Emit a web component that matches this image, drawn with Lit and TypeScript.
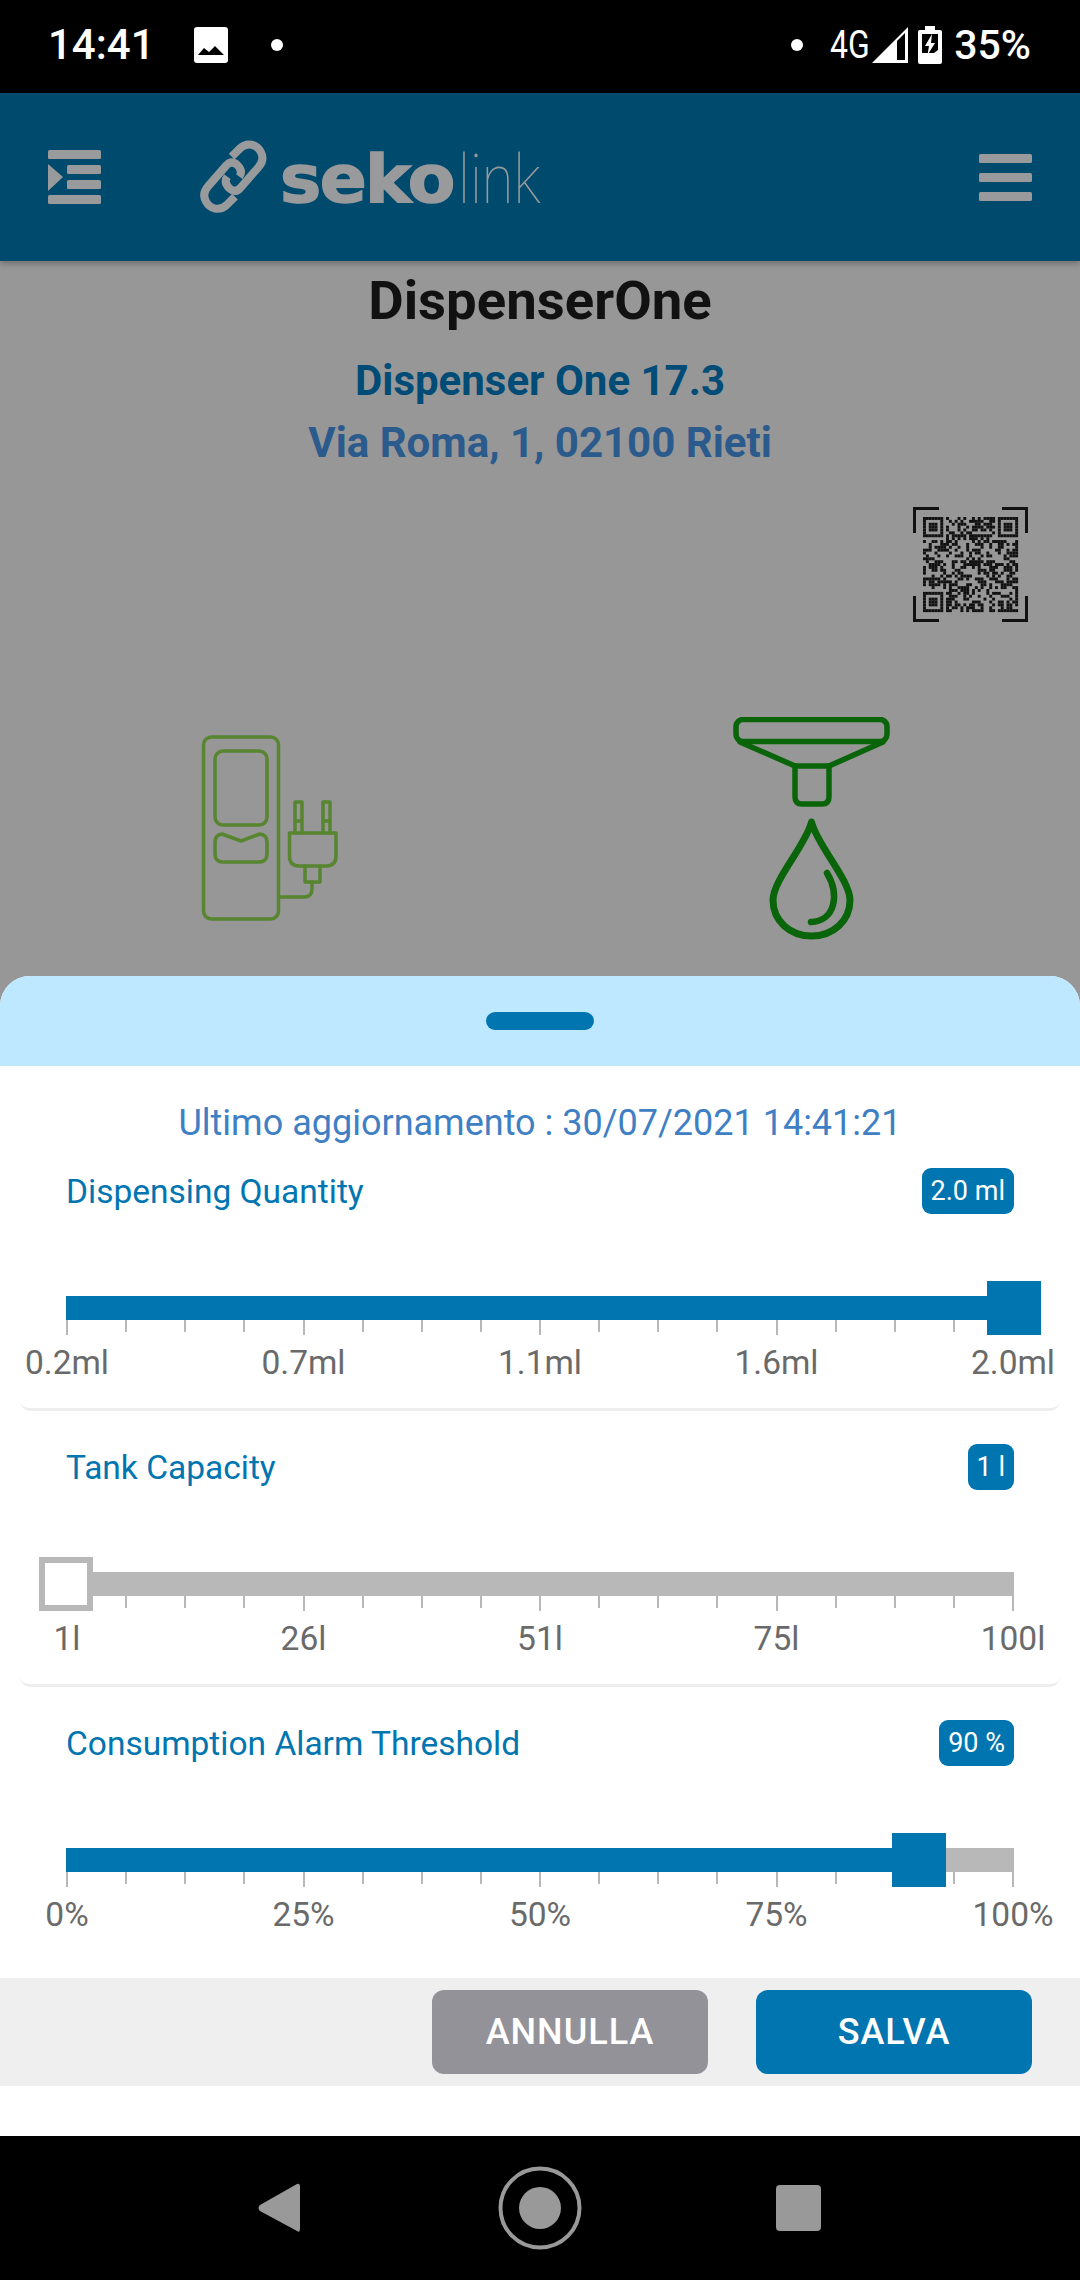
import { LitElement, html, css, svg } from "lit";
import { customElement, property } from "lit/decorators.js";

@customElement("slider-row")
class SliderRow extends LitElement {
  @property() label = "";
  @property() value = "";
  @property({ type: Number }) pct = 0;
  @property({ type: Array }) marks: string[] = [];

  static styles = css`
    :host { display: block; height: 276px; box-sizing: border-box; margin: 0 20px; padding: 33px 46px 0; border-bottom: 3px solid #eeeeee; border-radius: 0 0 10px 10px; font-family: Roboto, sans-serif; }
    :host([last]) { border-bottom-color: transparent; }
    .head { display: flex; justify-content: space-between; align-items: center; height: 46px; }
    .label { font-size: 33.5px; color: #0075b0; }
    .badge { height: 46px; box-sizing: border-box; padding: 0 9px; min-width: 45px; border-radius: 9px; background: #0075b0; color: #fff; font-size: 27px; display: flex; align-items: center; justify-content: center; }
    .track { position: relative; height: 24px; margin-top: 82px; background: #b8b8b8; }
    .fill { height: 100%; background: #0075b0; }
    .thumb { position: absolute; top: -15px; width: 54px; height: 54px; margin-left: -27px; box-sizing: border-box; background: #0075b0; }
    .thumb.empty { background: #fff; border: 6px solid #b8b8b8; }
    .ticks { display: flex; justify-content: space-between; height: 15px; }
    .ticks i { width: 2px; height: 12px; background: #b8b8b8; }
    .ticks i.major { height: 15px; }
    .marks { display: flex; justify-content: space-between; margin-top: 8px; padding: 0 1px; }
    .marks span { width: 0; display: flex; justify-content: center; white-space: nowrap; font-size: 33.5px; line-height: 40px; color: #6a6a6a; }
  `;

  render() {
    const empty = this.pct === 0;
    return html`
      <div class="head"><span class="label">${this.label}</span><span class="badge">${this.value}</span></div>
      <div class="track">
        <div class="fill" style="width:${this.pct}%"></div>
        <div class="thumb ${empty ? "empty" : ""}" style="left:${this.pct}%"></div>
      </div>
      <div class="ticks">${Array.from({ length: 17 }, (_, i) => html`<i class="${i % 4 === 0 ? "major" : ""}"></i>`)}</div>
      <div class="marks">${this.marks.map((m) => html`<span>${m}</span>`)}</div>
    `;
  }
}

function qrCells() {
  const n = 33;
  const cells: [number, number][] = [];
  const finder = (x: number, y: number, r: number, c: number) => {
    const dx = x - c, dy = y - r;
    if (dx < 0 || dy < 0 || dx > 6 || dy > 6) return null;
    if (dx === 0 || dy === 0 || dx === 6 || dy === 6) return true;
    if (dx === 1 || dy === 1 || dx === 5 || dy === 5) return false;
    return true;
  };
  let seed = 91;
  for (let y = 0; y < n; y++) {
    for (let x = 0; x < n; x++) {
      seed = (seed * 1103515245 + 12345) & 0x7fffffff;
      let on = ((seed >> 16) & 7) < 4;
      const inTL = x < 8 && y < 8, inTR = x > 24 && y < 8, inBL = x < 8 && y > 24;
      if (inTL) on = finder(x, y, 0, 0) === true;
      if (inTR) on = finder(x, y, 0, 26) === true;
      if (inBL) on = finder(x, y, 26, 0) === true;
      if (on) cells.push([x, y]);
    }
  }
  return cells;
}

@customElement("app-root")
class AppRoot extends LitElement {
  static styles = css`
    :host { display: flex; flex-direction: column; width: 1080px; height: 2280px; background: #979797; font-family: Roboto, sans-serif; overflow: hidden; }
    .status { height: 93px; background: #000; color: #fff; display: flex; align-items: center; padding: 0 49px 3px 48px; box-sizing: border-box; flex: none; }
    .time { font-size: 42px; font-weight: 500; line-height: 48px; }
    .status svg { display: block; flex: none; }
    .img { margin-left: 39px; }
    .dot { width: 12px; height: 12px; border-radius: 50%; background: #fff; flex: none; }
    .dot.a { margin-left: 43px; }
    .spacer { flex: 1; }
    .net { font-size: 38px; line-height: 44px; margin-left: 27px; transform: scaleX(.84); transform-origin: left; width: 38px; white-space: nowrap; }
    .sig { margin-left: 4px; }
    .bat { margin-left: 10px; }
    .pctx { font-size: 41px; font-weight: 500; line-height: 48px; margin-left: 12px; }
    .header { height: 168px; background: #004a6e; display: flex; align-items: center; padding: 0 48px; box-sizing: border-box; flex: none; box-shadow: 0 3px 6px rgba(0,0,0,.25); position: relative; }
    .header svg { display: block; flex: none; }
    .logo { margin-left: 97px; height: 76px; display: flex; color: #999a9c; white-space: nowrap; }
    .seko { font-family: "DejaVu Sans", sans-serif; font-weight: 700; font-size: 66px; line-height: 76px; letter-spacing: -1.5px; margin-top: 3px; width: 178px; -webkit-text-stroke: 1.5px #999a9c; transform: scaleX(1.05); transform-origin: left; }
    .link { font-weight: 100; font-size: 68px; line-height: 76px; margin-top: 3px; width: 85px; transform: scaleX(.85); transform-origin: left; }
    .content { height: 715px; flex: none; display: flex; flex-direction: column; align-items: center; }
    .title { font-size: 54.5px; font-weight: 700; color: #111; line-height: 60px; margin-top: 9px; }
    .sub { font-size: 42px; font-weight: 700; color: #004c76; line-height: 46px; margin-top: 28px; }
    .addr { font-size: 42px; font-weight: 700; color: #2b5a8c; line-height: 46px; margin-top: 16px; }
    .qr-row { align-self: stretch; display: flex; justify-content: flex-end; padding-right: 52px; margin-top: 41px; }
    .qr-row svg { display: block; }
    .icons { align-self: stretch; margin-top: 95px; }
    .icons svg { display: block; }
    .sheet { flex: 1; display: flex; flex-direction: column; background: #fff; border-radius: 30px 30px 0 0; overflow: hidden; }
    .grab { height: 90px; background: #bde8ff; display: flex; justify-content: center; align-items: center; flex: none; }
    .grab i { width: 108px; height: 18px; border-radius: 9px; background: #0075b0; }
    .updated { height: 69px; box-sizing: border-box; padding-top: 37px; text-align: center; font-size: 36px; line-height: 40px; color: #3f80c4; flex: none; white-space: nowrap; }
    .footer { margin-top: 15px; height: 108px; background: #efefef; display: flex; justify-content: flex-end; align-items: center; gap: 48px; padding-right: 48px; flex: none; }
    .btn { width: 276px; height: 84px; border-radius: 12px; color: #fff; font-size: 36px; font-weight: 500; letter-spacing: 1px; display: flex; align-items: center; justify-content: center; }
    .btn.gray { background: #929298; }
    .btn.blue { background: #0075b0; }
    .gap { flex: 1; }
    .nav { height: 144px; background: #000; flex: none; }
    .nav svg { display: block; }
  `;

  render() {
    const cells = qrCells();
    return html`
      <div class="status">
        <span class="time">14:41</span>
        <svg class="img" width="34" height="36" viewBox="0 0 34 36"><rect width="34" height="36" rx="3" fill="#fff"/><path d="M4 28 L10 21 L15 25 L21 19 L30 28 Z" fill="#000"/></svg>
        <i class="dot a"></i>
        <span class="spacer"></span>
        <i class="dot"></i>
        <span class="net">4G</span>
        <svg class="sig" width="36" height="36" viewBox="0 0 36 36"><path d="M0 36 L36 0 V36 Z" fill="#fff"/><path d="M25 14 L33 6 V33 H25 Z" fill="#000"/></svg>
        <svg class="bat" width="24" height="38" viewBox="0 0 24 38"><path d="M7 0 H17 V4 H22 a2 2 0 0 1 2 2 V36 a2 2 0 0 1 -2 2 H2 a2 2 0 0 1 -2 -2 V6 a2 2 0 0 1 2 -2 H7 Z" fill="#fff"/><path d="M4 8 H20 V24 L16 27 H4 Z" fill="#000"/><path d="M14 8 L7 20 H11 L9.500 29 L17 17 H13 Z" fill="#fff"/></svg>
        <span class="pctx">35%</span>
      </div>

      <div class="header">
        <svg width="53" height="54" viewBox="0 0 53 54" fill="#999a9c">
          <rect width="53" height="9" rx="1.500"/><rect x="19" y="15" width="34" height="9" rx="1.500"/><rect x="19" y="30" width="34" height="9" rx="1.500"/><rect y="45" width="53" height="9" rx="1.500"/>
          <path d="M0 14 L15 27 L0 41 Z"/>
        </svg>
        <div class="logo">
          <svg width="82" height="76" viewBox="0 0 82 76">
            <g transform="translate(-8 -4) scale(.3333)" fill="none" stroke="#999a9c" stroke-width="24" stroke-linecap="butt" stroke-linejoin="round">
              <path d="M125 65 L150 40 C172 20 200 28 212 50 C222 68 216 85 205 97 L150 160 Q135 175 118 160 Q100 142 112 125"/>
              <path d="M135 185 L110 210 C88 230 60 222 48 200 C38 182 44 165 55 153 L110 90 Q125 75 142 90 Q160 108 148 125"/>
            </g>
          </svg>
          <span class="seko">seko</span>
          <span class="link">link</span>
        </div>
        <span class="spacer"></span>
        <svg width="53" height="47" viewBox="0 0 53 47" fill="#999a9c"><rect width="53" height="9" rx="1.500"/><rect y="19" width="53" height="9" rx="1.500"/><rect y="38" width="53" height="9" rx="1.500"/></svg>
      </div>

      <div class="content">
        <div class="title">DispenserOne</div>
        <div class="sub">Dispenser One 17.3</div>
        <div class="addr">Via Roma, 1, 02100 Rieti</div>
        <div class="qr-row">
          <svg width="115" height="115" viewBox="0 0 115 115">
            <path d="M1.500 26 V1.500 H26 M89 1.500 H113.500 V26 M1.500 89 V113.500 H26 M113.500 89 V113.500 H89" fill="none" stroke="#111" stroke-width="3"/>
            <g fill="#111" transform="translate(10 10) scale(2.880)">${cells.map(([x, y]) => svg`<rect x="${x}" y="${y}" width="1.020" height="1.020"/>`)}</g>
          </svg>
        </div>
        <div class="icons">
          <svg width="1080" height="230" viewBox="0 0 1080 230">
            <g transform="translate(0 -717)">
              <g fill="none" stroke="#578530" stroke-width="3.500" stroke-linejoin="round" stroke-linecap="round">
                <rect x="203.500" y="737" width="75" height="182" rx="8"/>
                <rect x="215" y="751" width="52" height="74" rx="8"/>
                <path d="M222 834 L241 841 L260 834 Q267 835 267 842 V854 Q267 862 259 862 H223 Q215 862 215 854 V842 Q215 835 222 834 Z"/>
                <path d="M295 833 V802 H302 V833 M323 833 V802 H330 V833 M295 821 H302 M323 821 H330"/>
                <path d="M289.500 833 H336 V856 Q336 866 326 866 H299 Q289.500 866 289.500 856 Z"/>
                <path d="M305 866 V882 H320 V866"/>
                <path d="M279 897 H304 Q312 897 312 889 V882"/>
              </g>
              <g fill="none" stroke="#0a640a" stroke-width="5.500" stroke-linejoin="round" stroke-linecap="round">
                <rect x="736" y="719.500" width="151" height="22" rx="7"/>
                <path d="M740 742 L795 766 M883 742 L829 766 M795 766 H829"/>
                <path d="M795 766 V797 Q795 804 802 804 H822 Q829 804 829 797 V766"/>
                <path stroke-width="7" d="M811.500 822 C806 845 773 880 773 900 C773 921 790 936 811.500 936 C833 936 850 921 850 900 C850 880 817 845 811.500 822 Z"/>
                <path stroke-width="6.500" d="M827 873 C840 895 835 921 811 922"/>
              </g>
            </g>
          </svg>
        </div>
      </div>

      <div class="sheet">
        <div class="grab"><i></i></div>
        <div class="updated">Ultimo aggiornamento : 30/07/2021 14:41:21</div>
        <slider-row label="Dispensing Quantity" value="2.0 ml" pct="100" .marks=${["0.2ml", "0.7ml", "1.1ml", "1.6ml", "2.0ml"]}></slider-row>
        <slider-row label="Tank Capacity" value="1 l" pct="0" .marks=${["1l", "26l", "51l", "75l", "100l"]}></slider-row>
        <slider-row last label="Consumption Alarm Threshold" value="90 %" pct="90" .marks=${["0%", "25%", "50%", "75%", "100%"]}></slider-row>
        <div class="footer">
          <div class="btn gray">ANNULLA</div>
          <div class="btn blue">SALVA</div>
        </div>
        <div class="gap"></div>
      </div>

      <div class="nav">
        <svg width="1080" height="144" viewBox="0 0 1080 144">
          <path d="M297 48 Q300 47 300 51 V93 Q300 97 297 95 L260 75 Q257 72 260 69 Z" fill="#999"/>
          <circle cx="540" cy="72" r="39.500" fill="none" stroke="#999" stroke-width="4"/>
          <circle cx="540" cy="72" r="21" fill="#999"/>
          <rect x="776" y="49" width="45" height="46" rx="4" fill="#999"/>
        </svg>
      </div>
    `;
  }
}
